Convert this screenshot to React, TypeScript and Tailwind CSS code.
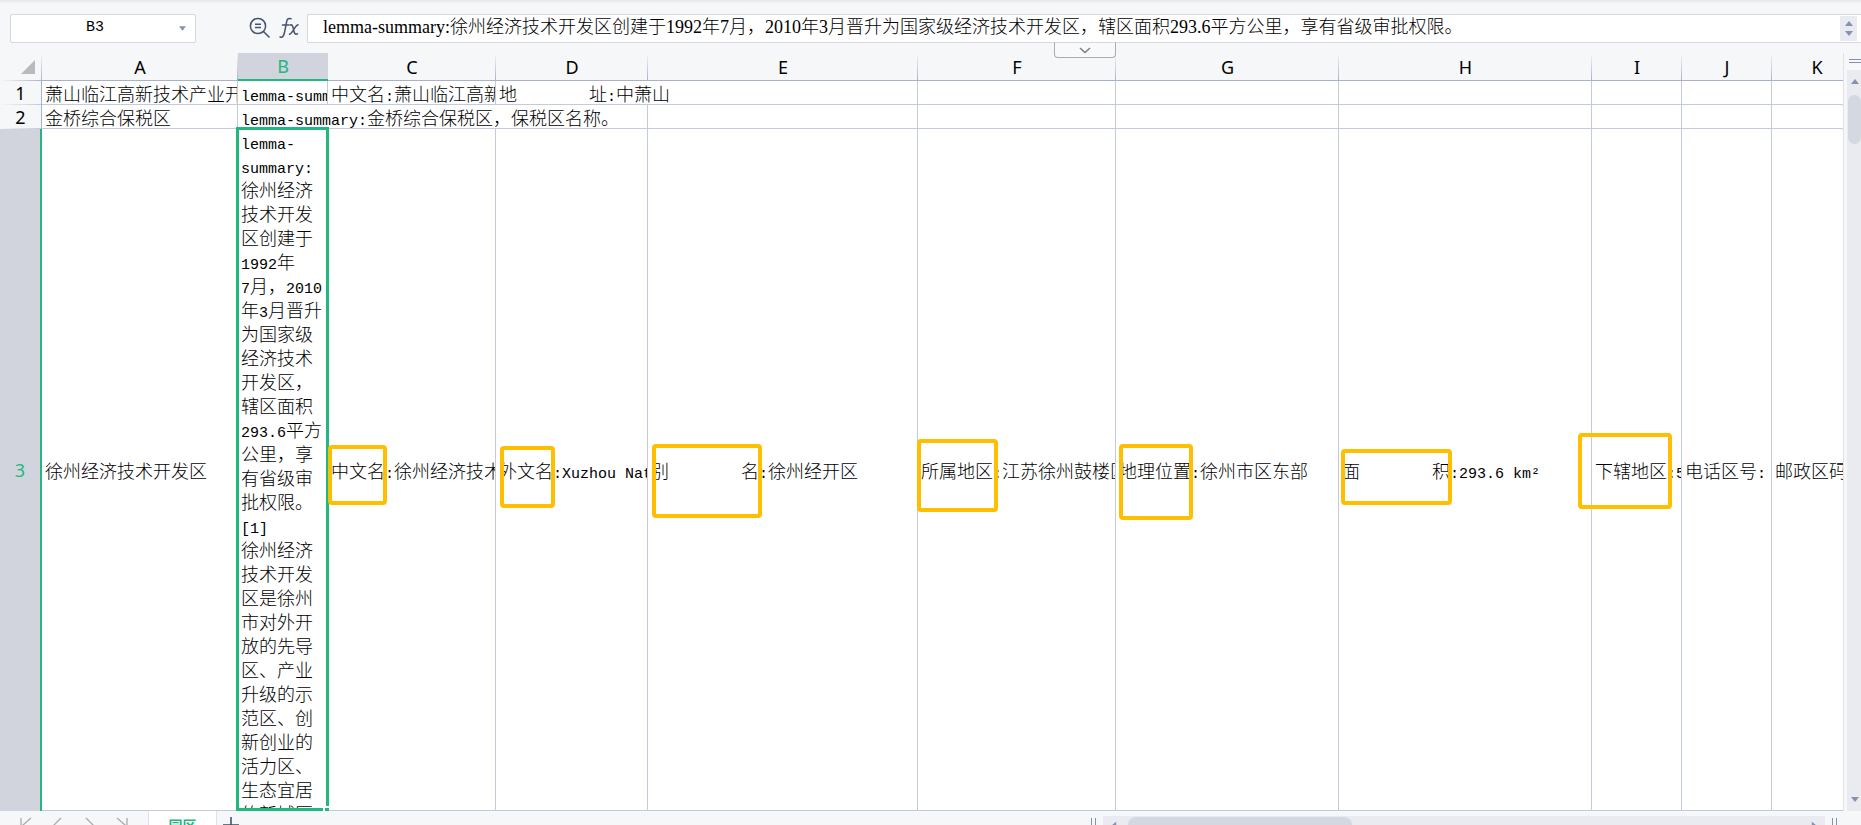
import { useState } from "react";
import clsx from "clsx";

interface Column {
  name: string;
  width: string;
}

const columns: Column[] = [
  { name: "A", width: "w-[196px]" },
  { name: "B", width: "w-[90px]" },
  { name: "C", width: "w-[168px]" },
  { name: "D", width: "w-[152px]" },
  { name: "E", width: "w-[270px]" },
  { name: "F", width: "w-[198px]" },
  { name: "G", width: "w-[223px]" },
  { name: "H", width: "w-[253px]" },
  { name: "I", width: "w-[90px]" },
  { name: "J", width: "w-[90px]" },
  { name: "K", width: "w-[90px]" },
];

interface CellData {
  text: string;
  span?: number;
}

const row1: CellData[] = [
  { text: "萧山临江高新技术产业开发区" },
  { text: "lemma-summary:" },
  { text: "中文名:萧山临江高新技术" },
  { text: "地        址:中萧山", span: 2 },
  { text: "" },
  { text: "" },
  { text: "" },
  { text: "" },
  { text: "" },
  { text: "" },
];

const row2: CellData[] = [
  { text: "金桥综合保税区" },
  { text: "lemma-summary:金桥综合保税区，保税区名称。", span: 3 },
  { text: "" },
  { text: "" },
  { text: "" },
  { text: "" },
  { text: "" },
  { text: "" },
  { text: "" },
];

const summaryLines = [
  "lemma-",
  "summary:",
  "徐州经济",
  "技术开发",
  "区创建于",
  "1992年",
  "7月，2010",
  "年3月晋升",
  "为国家级",
  "经济技术",
  "开发区，",
  "辖区面积",
  "293.6平方",
  "公里，享",
  "有省级审",
  "批权限。",
  "[1]",
  "徐州经济",
  "技术开发",
  "区是徐州",
  "市对外开",
  "放的先导",
  "区、产业",
  "升级的示",
  "范区、创",
  "新创业的",
  "活力区、",
  "生态宜居",
  "的新城区",
];

const row3 = [
  "中文名:徐州经济技术开发区",
  "外文名:Xuzhou National",
  "别        名:徐州经开区",
  "所属地区:江苏徐州鼓楼区",
  "地理位置:徐州市区东部",
  "面        积:293.6 km²",
  "下辖地区:5",
  "电话区号:",
  "邮政区码:",
];

// highlight frames drawn over row 3
const marks = [
  "left-[328px] top-[392px] h-[60px] w-[59px]",
  "left-[500px] top-[393px] h-[62px] w-[55px]",
  "left-[652px] top-[391px] h-[74px] w-[110px]",
  "left-[917px] top-[386px] h-[73px] w-[81px]",
  "left-[1119px] top-[391px] h-[76px] w-[74px]",
  "left-[1341px] top-[396px] h-[56px] w-[111px]",
  "left-[1578px] top-[380px] h-[76px] w-[94px]",
];

// Latin runs are half as wide as a Chinese character
const CellText = ({ text }: { text: string }) => (
  <>
    {text.split(/([ -~²]+)/).map((part, i) =>
      i % 2 ? (
        <span key={i} className="font-['Liberation_Mono',monospace] text-[15px] leading-none">
          {part}
        </span>
      ) : (
        part
      )
    )}
  </>
);

const cellClass =
  "h-6 overflow-hidden border-r border-b border-[#c3cadc] bg-white p-0 pl-[3px] text-left font-light whitespace-pre";

const Row = ({ index, cells }: { index: number; cells: CellData[] }) => (
  <tr>
    <th scope="row" className="relative border-r border-[#a9b2c9] p-0 font-['Noto_Sans',sans-serif] font-normal">
      {index}
      <span className="absolute right-0 bottom-0 left-0 h-px bg-linear-to-r from-transparent to-[#c3cadc]" />
    </th>
    {cells.map((cell, i) => (
      <td key={i} colSpan={cell.span} className={cellClass}>
        <div className="h-[23px] overflow-hidden leading-6">
          <CellText text={cell.text} />
        </div>
      </td>
    ))}
  </tr>
);

const Triangle = ({ className }: { className?: string }) => (
  <svg viewBox="0 0 8 5" className={clsx("h-[5px] w-2 fill-[#8492b0]", className)}>
    <path d="M4 0 L8 5 H0 Z" />
  </svg>
);

const FormulaBar = () => {
  const [formula, setFormula] = useState(
    "lemma-summary:徐州经济技术开发区创建于1992年7月，2010年3月晋升为国家级经济技术开发区，辖区面积293.6平方公里，享有省级审批权限。"
  );

  return (
    <div className="relative flex h-[53px] shrink-0 items-start bg-linear-to-b from-[#e6e8eb] to-[#f5f7f9] to-[4px] pt-[14px] pl-[10px]">
      <div className="flex h-[29px] w-[186px] items-center rounded-[2px] border border-[#d6d8dd] bg-white">
        <input
          aria-label="Name box"
          defaultValue="B3"
          className="w-full min-w-0 flex-1 text-center font-['Liberation_Mono',monospace] text-[15px] outline-none"
        />
        <button aria-label="Cell names" className="flex w-4 items-center">
          <Triangle className="h-[4px] w-[7px] rotate-180" />
        </button>
      </div>

      <div className="flex w-[111px] items-center justify-end gap-2 pt-[3px] pr-2 text-[#46536e]">
        <button aria-label="Zoom">
          <svg viewBox="0 0 22 22" className="h-[22px] w-[22px] fill-none stroke-current" strokeWidth="1.5">
            <circle cx="9" cy="9" r="7.6" />
            <path d="M14.5 14.5 L20.5 20.5 M6 7.3 H12 M6 10.5 H12" />
          </svg>
        </button>
        <button aria-label="Insert function">
          <svg viewBox="0 0 20 22" className="h-[22px] w-5 fill-none stroke-current" strokeWidth="1.5" strokeLinecap="round">
            <path d="M1 20 C4 21 5 18 5.6 15 L7.6 5 C8 2 9.5 1 12 1.8 M3.5 8 H9.8" />
            <path d="M11 8 C13.5 7 14 10 14.6 13 C15.2 16 16 18 18.5 16.8 M19 7.8 C16 8.5 13.5 16.5 10.6 17.2" />
          </svg>
        </button>
      </div>

      <div className="flex h-[29px] min-w-0 flex-1 rounded-l-[2px] border border-r-0 border-[#d6d8dd] bg-white">
        <input
          aria-label="Formula"
          value={formula}
          onChange={(e) => setFormula(e.target.value)}
          className="h-6 min-w-0 flex-1 pl-[15px] font-['Liberation_Serif','Noto_Sans_CJK_SC',serif] text-[18px] font-light outline-none"
        />
        <div className="my-px mr-1 flex w-[17px] flex-col items-center justify-center gap-[5px] bg-[#e9ebf1]">
          <button aria-label="Scroll up" className="flex">
            <Triangle />
          </button>
          <button aria-label="Scroll down" className="flex">
            <Triangle className="rotate-180" />
          </button>
        </div>
      </div>

      <button
        aria-label="Expand formula bar"
        className="absolute top-[42px] left-[1054px] z-10 flex h-4 w-[62px] items-center justify-center rounded-b-[4px] border border-[#aaacb0] border-t-[#d6d8dd] bg-[#f8f9fa]"
      >
        <svg viewBox="0 0 12 7" className="h-[7px] w-3 fill-none stroke-[#7d7f84]" strokeWidth="1.5">
          <path d="M1 1 L6 5.5 L11 1" />
        </svg>
      </button>
    </div>
  );
};

const Sheet = () => (
  <div className="relative min-w-0 flex-1 overflow-hidden">
    <table className="w-[1862px] table-fixed border-separate border-spacing-0 font-['Noto_Sans_CJK_SC',sans-serif] text-[18px] leading-6">
      <colgroup>
        <col className="w-[42px]" />
        {columns.map((col) => (
          <col key={col.name} className={col.width} />
        ))}
      </colgroup>
      <thead>
        <tr className="font-['Noto_Sans',sans-serif]">
          <th aria-label="Select all" className="relative h-7 p-0">
            <svg viewBox="0 0 14 14" className="ml-[21px] h-[14px] w-[14px] fill-[#b9babd]">
              <path d="M14 0 V14 H0 Z" />
            </svg>
            <span className="absolute top-0 right-0 bottom-0 w-px bg-linear-to-b from-transparent to-[#a9b2c9]" />
            <span className="absolute right-0 bottom-0 left-0 h-px bg-linear-to-r from-transparent to-[#a9b2c9]" />
          </th>
          {columns.map((col) => {
            const selected = col.name === "B";
            return (
              <th
                key={col.name}
                scope="col"
                className={clsx(
                  "relative h-7 p-0 font-normal",
                  selected
                    ? "border-b-2 border-[#22b77e] bg-[#d1d4dd] text-[#22b77e]"
                    : "border-b border-[#a9b2c9]"
                )}
              >
                {col.name}
                {!selected && (
                  <span className="absolute top-0 right-0 bottom-0 w-px bg-linear-to-b from-transparent to-[#a9b2c9]" />
                )}
              </th>
            );
          })}
        </tr>
      </thead>
      <tbody>
        <Row index={1} cells={row1} />
        <Row index={2} cells={row2} />
        <tr>
          <th
            scope="row"
            className="border-r-2 border-[#22b77e] bg-[#d1d4dd] p-0 font-['Noto_Sans',sans-serif] font-normal text-[#22b77e]"
          >
            3
          </th>
          <td className={cellClass}>
            <CellText text="徐州经济技术开发区" />
          </td>
          <td className="relative border-b border-[#c3cadc] bg-white p-0 pl-[3px] align-top font-light whitespace-pre">
            <div className="h-[681px] overflow-hidden">
              {summaryLines.map((line, i) => (
                <div key={i} className="h-6">
                  <CellText text={line} />
                </div>
              ))}
            </div>
            <div className="absolute -top-[2px] -right-px -bottom-px -left-[2px] border-3 border-[#22b77e]">
              <span className="absolute -right-[3px] -bottom-[3px] h-[5px] w-[6px] border-t-2 border-l-2 border-white bg-[#22b77e]" />
            </div>
          </td>
          {row3.map((text) => (
            <td key={text} className={cellClass}>
              <CellText text={text} />
            </td>
          ))}
        </tr>
      </tbody>
    </table>

    {marks.map((mark) => (
      <div key={mark} className={clsx("pointer-events-none absolute rounded-[4px] border-4 border-[#ffbf00]", mark)} />
    ))}
  </div>
);

const VerticalScroll = () => (
  <div className="flex w-[18px] flex-col border-l border-[#dfe2e9] pl-[3px]">
    <div className="flex h-[17px] flex-col gap-[2px] pt-[6px] pl-[2px]">
      <span className="h-px bg-[#8492b0]" />
      <span className="h-px bg-[#8492b0]" />
    </div>
    <div className="flex flex-1 flex-col items-center bg-[#e9ebf1] py-[9px] pl-px">
      <Triangle />
      <div className="mt-[11px] h-[49px] w-full rounded-[7px] bg-[#d4d8e0]" />
      <Triangle className="mt-auto rotate-180" />
    </div>
  </div>
);

const Grip = () => (
  <div className="mt-[7px] flex h-4 w-[5px] justify-between">
    <span className="w-px bg-[#8492b0]" />
    <span className="w-px bg-[#8492b0]" />
  </div>
);

const navPaths = [
  { label: "First sheet", d: "M2 1 V15 M12 1 L4 8 L12 15" },
  { label: "Previous sheet", d: "M10 1 L3 8 L10 15" },
  { label: "Next sheet", d: "M3 1 L10 8 L3 15" },
  { label: "Last sheet", d: "M2 1 L10 8 L2 15 M12 1 V15" },
];

const SheetTabs = () => (
  <div className="flex h-7 shrink-0">
    <div className="flex w-[148px] items-center gap-[18px] pl-[19px]">
      {navPaths.map((nav) => (
        <button key={nav.label} aria-label={nav.label}>
          <svg viewBox="0 0 14 16" className="h-4 w-[14px] fill-none stroke-[#a9abb0]" strokeWidth="1.3">
            <path d={nav.d} />
          </svg>
        </button>
      ))}
    </div>
    <button className="w-[69px] border-x border-[#dfe2e9] bg-white font-['Noto_Sans_CJK_SC',sans-serif] text-[14px] font-bold text-[#22b77e]">
      园区
    </button>
    <button aria-label="New sheet" className="ml-[6px]">
      <svg viewBox="0 0 16 16" className="h-4 w-4 stroke-[#3b4a63]" strokeWidth="1.5">
        <path d="M8 0 V16 M0 8 H16" />
      </svg>
    </button>

    <div className="ml-auto flex w-[770px] gap-[7px] pr-6">
      <Grip />
      <div className="mt-[5px] flex h-[18px] flex-1 items-center bg-[#e9ebf1] px-[7px]">
        <Triangle className="-rotate-90" />
        <div className="mx-[10px] flex h-4 flex-1">
          <span className="w-1/3 rounded-[8px] bg-[#d4d8e0]" />
        </div>
        <Triangle className="rotate-90" />
      </div>
      <Grip />
    </div>
  </div>
);

export default function App() {
  return (
    <div className="flex h-screen flex-col overflow-hidden bg-[#f5f7f9] text-black">
      <FormulaBar />
      <div className="flex shrink-0">
        <Sheet />
        <VerticalScroll />
      </div>
      <SheetTabs />
    </div>
  );
}
